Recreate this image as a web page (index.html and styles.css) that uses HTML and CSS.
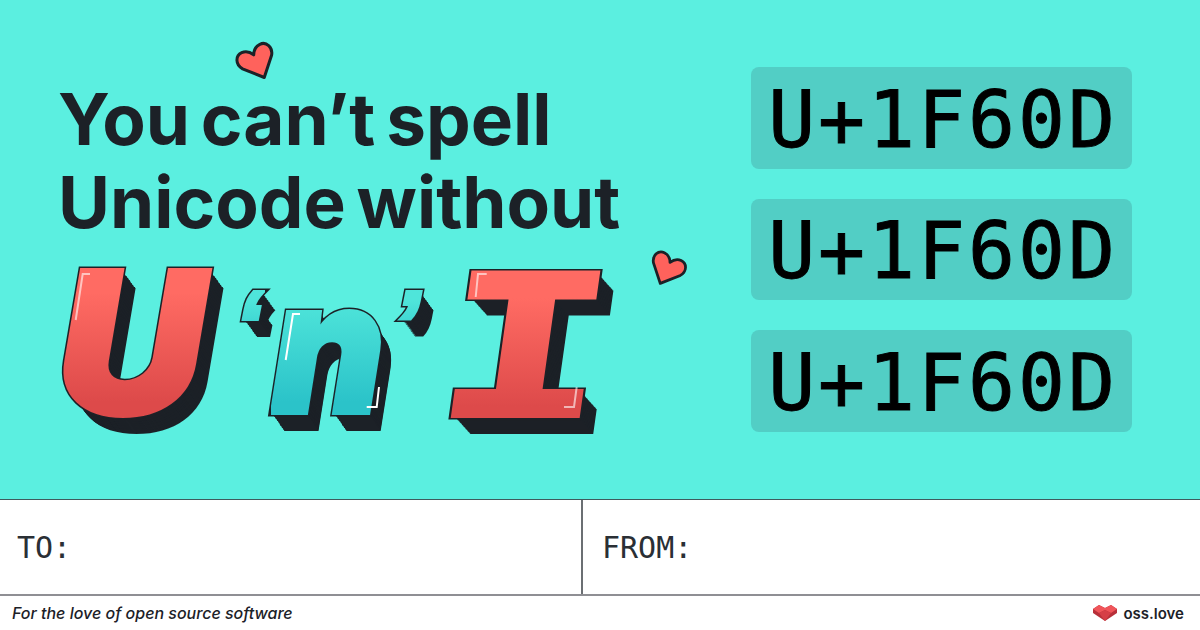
FILE: index.html
```html
<!DOCTYPE html>
<html lang="en">
<head>
<meta charset="utf-8">
<title>You can't spell Unicode without U'n'I</title>
<link rel="stylesheet" href="styles.css">
</head>
<body>
<main class="card">
  <section class="hero">
    <div class="pitch">
      <svg class="heart heart-top" viewBox="0 0 40 36"><path d="M20 34 4 17C-1 10 3 2 10 2 15 2 18 5 20 9 22 5 25 2 30 2 37 2 41 10 36 17Z"/></svg>
      <svg class="heart heart-side" viewBox="0 0 40 36"><path d="M20 34 4 17C-1 10 3 2 10 2 15 2 18 5 20 9 22 5 25 2 30 2 37 2 41 10 36 17Z"/></svg>
      <h1 class="headline">You can’t spell<br>Unicode without</h1>
      <div class="lettering" role="img" aria-label="U'n'I">
        <span class="glyph glyph-u" data-t="U"><span class="face coral">U</span></span>
        <span class="glyph glyph-q1" data-t="‘"><span class="face teal">‘</span></span>
        <span class="glyph glyph-n" data-t="n"><span class="face teal">n</span></span>
        <span class="glyph glyph-q2" data-t="’"><span class="face teal">’</span></span>
        <span class="glyph glyph-i" data-t="I"><span class="face coral">I</span></span>
        <svg class="glints" viewBox="0 0 600 200">
          <path d="M15.7 80 22.7 34H30" opacity=".6"/>
          <path d="M225.7 120 233 74H240"/>
          <path d="M415.7 57 418 34H426.7" opacity=".6"/>
          <path d="M319 147 316.7 167H306.7"/>
          <path d="M516.7 147 514 167H504" opacity=".6"/>
        </svg>
      </div>
    </div>
    <div class="codes">
      <div class="code">U+1F60D</div>
      <div class="code">U+1F60D</div>
      <div class="code">U+1F60D</div>
    </div>
  </section>
  <section class="address">
    <div class="field field-to">TO:</div>
    <div class="field">FROM:</div>
  </section>
  <footer class="foot">
    <em class="tagline">For the love of open source software</em>
    <span class="brand">
      <svg class="brand-mark" viewBox="0 0 24 16"><path class="b1" d="M0 4 6 0l6 3 6-3 6 4v4l-12 8L0 8Z"/><path class="b2" d="M0 4l6-4 6 3 6-3 6 4-6 4-6-3-6 3Z"/><path class="b3" d="M12 5l6 3-6 8-6-8Z"/></svg>
      oss.love
    </span>
  </footer>
</main>
</body>
</html>
```
FILE: styles.css
```css
* { box-sizing: border-box; }
html, body { margin: 0; padding: 0; }
body { width: 1200px; height: 630px; overflow: hidden; background: #fff; color: #1c2127; font-family: "Inter", "Liberation Sans", sans-serif; }
.card { display: flex; flex-direction: column; width: 1200px; height: 630px; }

.hero { display: flex; justify-content: space-between; height: 500px; padding: 67px 68px 0 60px; background: #5befe0; border-bottom: 1px solid #3f5a5e; }
.pitch { position: relative; width: 640px; }
.headline { margin: 11px 0 0 -2px; font-size: 71px; line-height: 83px; font-weight: 700; word-spacing: -6px; color: #1c2127; }

.heart { position: absolute; fill: #ff625c; stroke: #1c2127; stroke-width: 3; stroke-linejoin: round; }
.heart-top { left: 177px; top: -22px; width: 41px; height: 36px; transform: rotate(-25deg); }
.heart-side { left: 588px; top: 186px; width: 37px; height: 34px; transform: rotate(25deg); }

.lettering { position: relative; display: flex; align-items: flex-start; height: 200px; margin-top: -4px; }
.glyph { position: relative; display: block; line-height: 1; transform-origin: left 85%; }
.glyph::before, .face { display: block; }
.glyph::before { content: attr(data-t); position: absolute; left: 0; top: 0; color: #1c2127; -webkit-text-stroke: 7px #1c2127;
  text-shadow: .5px .7px #1c2127, 1px 1.4px #1c2127, 1.5px 2.1px #1c2127, 2px 2.8px #1c2127, 2.5px 3.5px #1c2127, 3px 4.2px #1c2127, 3.5px 4.8px #1c2127, 4px 5.5px #1c2127, 4.5px 6.2px #1c2127, 5px 6.9px #1c2127, 5.5px 7.6px #1c2127, 6px 8.3px #1c2127, 6.5px 9px #1c2127, 7px 9.7px #1c2127, 7.5px 10.4px #1c2127, 8px 11.1px #1c2127, 8.5px 11.8px #1c2127, 9px 12.5px #1c2127, 9.5px 13.2px #1c2127, 10px 13.8px #1c2127, 10.5px 14.5px #1c2127, 11px 15.2px #1c2127, 11.5px 15.9px #1c2127, 12px 16.6px #1c2127, 12.5px 17.3px #1c2127, 13px 18px #1c2127; }
.face { position: relative; color: transparent; -webkit-text-stroke: 4px transparent; -webkit-background-clip: text; background-clip: text; }
.coral { background-image: linear-gradient(#ff6b63 25%, #dd4a4a 80%); }
.teal { background-image: linear-gradient(#4fe5da 25%, #2bc3c9 80%); }

.glyph-u { flex: 0 0 178px; margin: 3px 0 0 -3px; font: italic 900 198px/1 "Inter", sans-serif; transform: scaleX(1.03); }
.glyph-q1 { flex: 0 0 30px; margin-top: 37px; font: italic 700 95px/1 "Liberation Sans", sans-serif; }
.glyph-n { flex: 0 0 130px; margin: 14px 0 0 6px; font: italic 900 185px/1 "Inter", sans-serif; transform: scaleX(.95); }
.glyph-q2 { flex: 0 0 52px; margin: 37px 0 0 -8px; font: italic 700 95px/1 "Liberation Sans", sans-serif; }
.glyph-i { flex: 0 0 170px; margin: 9px 0 0 -15px; font: 700 197px/1 "DejaVu Sans Mono", monospace; transform: skewX(-8deg) scaleX(1.44); }

.glints { position: absolute; left: 0; top: 0; width: 600px; height: 200px; overflow: visible; fill: none; stroke: #fff; stroke-width: 2; }

.codes { display: flex; flex-direction: column; gap: 30px; width: 381px; }
.code { display: flex; align-items: center; justify-content: center; height: 101.5px; padding: 4px 0 0 3px; border-radius: 8px; background: #52cec5; color: #000; font: 78px/1 "DejaVu Sans Mono", monospace; letter-spacing: 3px; -webkit-text-stroke: 1px #000; }

.address { display: flex; height: 96px; border-bottom: 2px solid #8f8f94; }
.field { flex: 1; display: flex; align-items: center; padding: 2px 0 0 19px; font: 30px/1 "DejaVu Sans Mono", monospace; color: #2a2f35; }
.field-to { flex: 0 0 583px; padding-left: 17px; border-right: 2px solid #6b6f73; }

.foot { flex: 1; display: flex; align-items: center; justify-content: space-between; padding: 0 16px 0 12px; }
.tagline { font-size: 16px; font-weight: 500; font-style: italic; }
.brand { display: flex; align-items: center; gap: 6px; font-size: 15px; font-weight: 600; }
.brand-mark { width: 24px; height: 16px; }
.b1 { fill: #b8303a; } .b2 { fill: #f0555a; } .b3 { fill: #d63f47; }
```
